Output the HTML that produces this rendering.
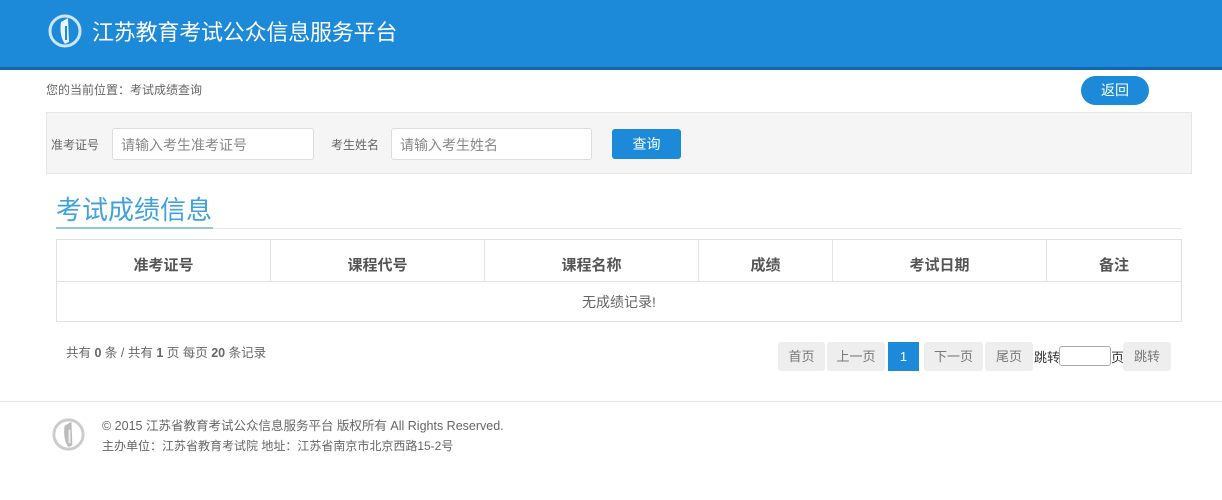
<!DOCTYPE html>
<html><head><meta charset="utf-8"><style>
*{margin:0;padding:0;box-sizing:border-box}
body{width:1222px;height:500px;background:#fff;font-family:"Liberation Sans","Noto Sans CJK SC",sans-serif;position:relative;overflow:hidden;color:#555}
.a{position:absolute}
.hdr{left:0;top:0;width:1222px;height:70px;background:#1c8ad9;border-bottom:3px solid #1466b0}
.t{left:92px;top:15px;font-size:22px;color:#fff;letter-spacing:-0.2px}
.inp{border:1px solid #ddd;border-radius:3px;background:#fff;height:32px;font-size:14px;color:#888;padding:6px 8px}
.th{position:absolute;top:0;height:41px;line-height:52px;text-align:center;font-weight:bold;font-size:15px;color:#555;border-right:1px solid #e3e3e3}
.pb{position:absolute;top:342px;height:29px;line-height:29px;background:#eee;border-radius:3px;text-align:center;font-size:13px;color:#777}
</style></head><body>
<div class="a hdr"></div>
<svg class="a" style="left:46px;top:12px" width="38" height="38" viewBox="0 0 38 38"><circle cx="19" cy="19" r="15" fill="none" stroke="#cfe6f8" stroke-width="3"/><path d="M15 10 L22 6 L23 30 L19 32 Q13 24 15 10Z" fill="#eaf4fc"/><path d="M19 14 L21 14 L21 28 L19 28Z" fill="#1c8ad9"/></svg>
<div class="a t">江苏教育考试公众信息服务平台</div>
<div class="a" style="left:46px;top:81px;font-size:12px;color:#666">您的当前位置：考试成绩查询</div>
<div class="a" style="left:1081px;top:76px;width:68px;height:29px;border-radius:15px;background:#1c8ad9;color:#fff;font-size:14px;text-align:center;line-height:29px">返回</div>
<div class="a" style="left:46px;top:112px;width:1146px;height:62px;background:#f5f5f5;border:1px solid #e6e6e6"></div>
<div class="a" style="left:51px;top:136px;font-size:12px;color:#666">准考证号</div>
<div class="a inp" style="left:112px;top:128px;width:202px">请输入考生准考证号</div>
<div class="a" style="left:331px;top:136px;font-size:12px;color:#666">考生姓名</div>
<div class="a inp" style="left:391px;top:128px;width:201px">请输入考生姓名</div>
<div class="a" style="left:612px;top:129px;width:69px;height:30px;background:#1c8ad9;border-radius:3px;color:#fff;font-size:14px;text-align:center;line-height:30px">查询</div>
<div class="a" style="left:56px;top:190px;font-size:26px;color:#3fa2dc">考试成绩信息</div>
<div class="a" style="left:56px;top:228px;width:1126px;height:1px;background:#e8e8e8"></div>
<div class="a" style="left:56px;top:227px;width:157px;height:2px;background:#8cc6ea"></div>
<div class="a" style="left:56px;top:239px;width:1126px;height:83px;border:1px solid #e0e0e0">
<div class="th" style="left:0;width:214px">准考证号</div>
<div class="th" style="left:214px;width:214px">课程代号</div>
<div class="th" style="left:428px;width:214px">课程名称</div>
<div class="th" style="left:642px;width:134px">成绩</div>
<div class="th" style="left:776px;width:214px">考试日期</div>
<div class="th" style="left:990px;width:134px;border-right:none">备注</div>
<div class="a" style="left:0;top:41px;width:1124px;height:1px;background:#e3e3e3"></div>
<div class="a" style="left:0;top:52px;width:1124px;text-align:center;font-size:14px;color:#666">无成绩记录!</div>
</div>
<div class="a" style="left:66px;top:342px;font-size:12.5px;color:#666">共有 <b>0</b> 条 / 共有 <b>1</b> 页 每页 <b>20</b> 条记录</div>
<div class="pb" style="left:778px;width:47px">首页</div>
<div class="pb" style="left:827px;width:58px">上一页</div>
<div class="pb" style="left:888px;width:31px;background:#1c8ad9;color:#fff;border-radius:0">1</div>
<div class="pb" style="left:924px;width:59px">下一页</div>
<div class="pb" style="left:985px;width:48px">尾页</div>
<div class="a" style="left:1034px;top:347px;font-size:13px;color:#333">跳转</div>
<div class="a" style="left:1059px;top:346px;width:52px;height:20px;border:1px solid #aaa;border-radius:3px;background:#fff"></div>
<div class="a" style="left:1111px;top:347px;font-size:13px;color:#333">页</div>
<div class="pb" style="left:1123px;width:48px">跳转</div>
<div class="a" style="left:0;top:401px;width:1222px;height:1px;background:#e8e8e8"></div>
<svg class="a" style="left:50px;top:416px" width="37" height="37" viewBox="0 0 38 38"><circle cx="19" cy="19" r="15" fill="none" stroke="#ccc" stroke-width="3"/><path d="M15 10 L22 6 L23 30 L19 32 Q13 24 15 10Z" fill="#bbb"/><path d="M19 14 L21 14 L21 28 L19 28Z" fill="#eee"/></svg>
<div class="a" style="left:102px;top:415px;font-size:12.5px;color:#666">© 2015 江苏省教育考试公众信息服务平台 版权所有 All Rights Reserved.</div>
<div class="a" style="left:102px;top:437px;font-size:12px;color:#666">主办单位：江苏省教育考试院 地址：江苏省南京市北京西路15-2号</div>
</body></html>
